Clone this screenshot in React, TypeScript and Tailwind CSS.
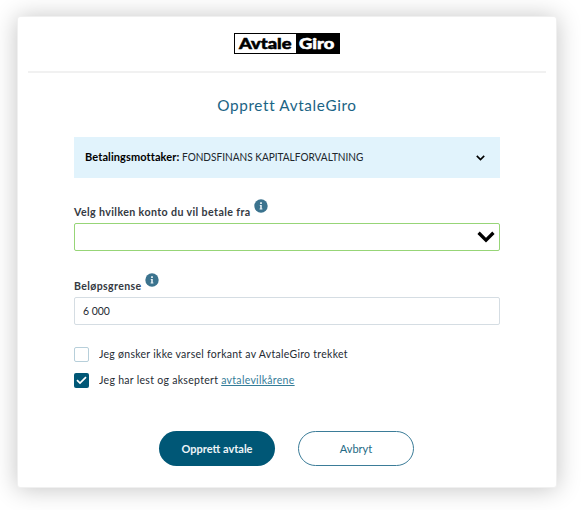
import React from "react";

function Chevron({ className, strokeWidth }: { className: string; strokeWidth: number }) {
  return (
    <svg
      className={className}
      viewBox="0 0 16 11"
      fill="none"
      stroke="currentColor"
      strokeWidth={strokeWidth}
    >
      <path d="M1.2 1.6 8 8.4 14.8 1.6" />
    </svg>
  );
}

function InfoIcon() {
  return (
    <svg className="size-[14px] shrink-0" viewBox="0 0 14 14">
      <circle cx="7" cy="7" r="6.7" fill="#3b738e" />
      <path d="M6.1 3.2h1.8v1.7H6.1zM5.8 5.9h2v3.7h.6v1H5.6v-1h.6V7h-.4z" fill="#e8f1f5" />
    </svg>
  );
}

function Logo() {
  return (
    <div className="flex h-[21px] w-[106px] border border-black bg-black text-[15px] font-black leading-[18px]">
      <div className="w-[61px] bg-white pl-[4px] text-black">
        <span className="inline-block origin-left scale-x-[1.22] [-webkit-text-stroke:0.5px_black]">
          Avtale
        </span>
      </div>
      <div className="pl-[3px] text-white">
        <span className="inline-block origin-left scale-x-[1.22] [-webkit-text-stroke:0.5px_white]">
          Giro
        </span>
      </div>
    </div>
  );
}

export default function App() {
  return (
    <div className="h-[510px] w-[584px] overflow-hidden bg-white pl-[17px] pt-[16px] font-['Lato',sans-serif] text-[11px] leading-[16px] text-[#252b33]">
      <div className="flex h-[472px] w-[540px] flex-col rounded-[3px] border border-[#f0f0f0] bg-white px-[10px] shadow-[0_1px_24px_rgba(0,0,0,0.24)]">
        <header className="flex h-[56px] shrink-0 justify-center border-b-2 border-[#f1f1f1] pt-[16px]">
          <Logo />
        </header>

        <main className="flex flex-col px-[46px]">
          <h1 className="mt-[21px] w-[426px] scale-x-[0.957] text-center text-[16px] leading-[22px] tracking-[0.65px] text-[#1b6485]">
            Opprett AvtaleGiro
          </h1>

          <div className="mt-[21px] flex h-[41px] w-[426px] items-center justify-between bg-[#e1f3fc] pl-[11px] pr-[15px] text-black">
            <p className="flex gap-[3px] pb-[2px]">
              <span className="font-bold tracking-[0.1px]">Betalingsmottaker:</span>
              <span className="origin-left scale-x-[0.915] text-[#20262c]">
                FONDSFINANS KAPITALFORVALTNING
              </span>
            </p>
            <Chevron className="h-[6px] w-[9px]" strokeWidth={3} />
          </div>

          <div className="mt-[21px] flex h-[24px]">
            <label className="w-[180px] origin-left scale-x-[0.967] whitespace-nowrap pt-[5px] font-bold tracking-[0.4px] text-[#343942]">
              Velg hvilken konto du vil betale fra
            </label>
            <InfoIcon />
          </div>
          <div className="flex h-[28px] w-[426px] items-center justify-end rounded-[2px] border border-[#97d577] pr-[4px] text-black">
            <Chevron className="h-[12px] w-[18px]" strokeWidth={3} />
          </div>

          <div className="mt-[22px] flex h-[24px]">
            <label className="w-[71px] origin-left scale-x-[0.96] pt-[5px] font-bold tracking-[0.4px] text-[#343942]">
              Beløpsgrense
            </label>
            <InfoIcon />
          </div>
          <div className="flex h-[28px] w-[426px] items-center rounded-[2px] border border-[#d5dde3] pl-[8px]">
            <span className="origin-left scale-x-[0.95]">6 000</span>
          </div>

          <div className="mt-[21px] flex items-center gap-[10px]">
            <span className="size-[15px] rounded-[2px] border border-[#b7cfda]" />
            <span className="origin-left scale-x-[0.953] tracking-[0.3px]">
              Jeg ønsker ikke varsel forkant av AvtaleGiro trekket
            </span>
          </div>
          <div className="mt-[10px] flex items-center gap-[10px]">
            <span className="flex size-[15px] items-center justify-center rounded-[2px] bg-[#005776]">
              <svg className="size-[11px]" viewBox="0 0 11 11" fill="none" stroke="white" strokeWidth="1.7">
                <path d="M1 5.2 4 8.1 10 2.2" />
              </svg>
            </span>
            <span className="origin-left scale-x-[0.957] tracking-[0.3px]">
              Jeg har lest og akseptert <a className="text-[#357d99] underline">avtalevilkårene</a>
            </span>
          </div>

          <div className="-ml-px mt-[43px] flex justify-center gap-[23px]">
            <button className="h-[35px] w-[116px] rounded-full bg-[#005776] font-bold text-[#eef5f8]">
              Opprett avtale
            </button>
            <button className="h-[35px] w-[116px] rounded-full border border-[#3b7c98] text-[#246984]">
              Avbryt
            </button>
          </div>
        </main>
      </div>
    </div>
  );
}
